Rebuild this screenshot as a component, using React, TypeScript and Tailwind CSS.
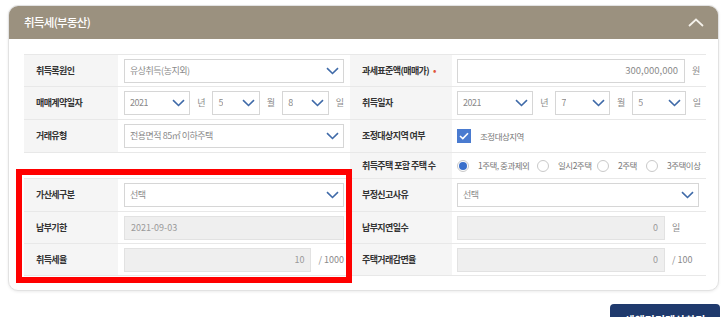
import React from "react";

const font = { fontFamily: '"Noto Sans CJK KR", "Noto Sans", sans-serif' };

function Chevron() {
  return (
    <svg width="13" height="8" viewBox="0 0 13 8" className="shrink-0">
      <path d="M1 1.2 L6.5 6.5 L12 1.2" fill="none" stroke="#3f6aa8" strokeWidth="1.6" />
    </svg>
  );
}

function Select({ value, w }: { value: string; w: string }) {
  return (
    <div className={`${w} h-[24px] flex items-center justify-between pl-[5px] pr-[4px] border border-[#d6d6d6] bg-white`}>
      <span className="text-[9px] tracking-[-0.5px] text-[#8a8a8a] truncate">{value}</span>
      <Chevron />
    </div>
  );
}

function Suffix({ children }: { children: React.ReactNode }) {
  return <span className="text-[9px] text-[#8a8a8a] whitespace-nowrap">{children}</span>;
}

function Label({ children }: { children: React.ReactNode }) {
  return (
    <div className="bg-[#f5f5f5] flex items-center pl-[12px] text-[9px] tracking-[-0.6px] font-semibold text-[#333] whitespace-nowrap">
      {children}
    </div>
  );
}

function Cell({ children, right }: { children?: React.ReactNode; right?: boolean }) {
  return (
    <div className={`flex items-center gap-[7px] ${right ? "pl-[5px] pr-[5px]" : "pl-[6px] pr-[6px]"}`}>
      {children}
    </div>
  );
}

function Radio({ checked, label, w }: { checked?: boolean; label: string; w: string }) {
  return (
    <div className={`${w} flex items-center gap-[9px] shrink-0`}>
      <span className="w-[12px] h-[12px] rounded-full border border-[#c9c9c9] bg-white flex items-center justify-center">
        {checked && <span className="w-[8px] h-[8px] rounded-full bg-[#3a6fcb]" />}
      </span>
      <span className="text-[8.5px] tracking-[-0.5px] text-[#777] whitespace-nowrap">{label}</span>
    </div>
  );
}

function ReadOnly({ value, w, align = "left" }: { value: string; w: string; align?: "left" | "right" }) {
  return (
    <div
      className={`${w} h-[24px] flex items-center px-[6px] border border-[#e2e2e2] bg-[#efefef] text-[9px] text-[#9a9a9a] ${
        align === "right" ? "justify-end" : "justify-start"
      }`}
    >
      {value}
    </div>
  );
}

const row = "grid grid-cols-[94px_232px_102px_254px] border-b border-[#e8e8e8]";

export default function App() {
  return (
    <div className="relative w-[725px] h-[317px] overflow-hidden bg-white" style={font}>
      <div className="pt-[5px] pl-[8px] pr-[6px]">
        {/* Card */}
        <div className="rounded-[10px] border border-[#e2e2e2] bg-white shadow-[0_1px_3px_rgba(0,0,0,0.08)] overflow-hidden">
          <div className="h-[33px] bg-[#9b917f] flex items-center justify-between pl-[15px] pr-[14px]">
            <span className="text-[11.5px] tracking-[-0.7px] font-medium text-white">취득세(부동산)</span>
            <svg width="16" height="9" viewBox="0 0 16 9">
              <path d="M1 8 L8 1.5 L15 8" fill="none" stroke="#f4f1ea" strokeWidth="1.8" />
            </svg>
          </div>

          <div className="pt-[15px] pb-[14px] pl-[15px]">
            <div className="w-[682px] border-t border-[#e8e8e8]">
              <div className={`${row} h-[32px]`}>
                <Label>취득록원인</Label>
                <Cell>
                  <Select value="유상취득(농지외)" w="w-[220px]" />
                </Cell>
                <Label>
                  과세표준액(매매가) <span className="text-[#e0553a] ml-[4px]">•</span>
                </Label>
                <Cell right>
                  <div className="w-[228px] h-[24px] flex items-center justify-end px-[6px] border border-[#d6d6d6] bg-white text-[9.5px] text-[#8a8a8a]">
                    300,000,000
                  </div>
                  <Suffix>원</Suffix>
                </Cell>
              </div>

              <div className={`${row} h-[33px]`}>
                <Label>매매계약일자</Label>
                <Cell>
                  <Select value="2021" w="w-[73px]" />
                  <Suffix>년</Suffix>
                  <Select value="5" w="w-[52px]" />
                  <Suffix>월</Suffix>
                  <Select value="8" w="w-[51px]" />
                  <Suffix>일</Suffix>
                </Cell>
                <Label>취득일자</Label>
                <Cell right>
                  <Select value="2021" w="w-[80px]" />
                  <Suffix>년</Suffix>
                  <Select value="7" w="w-[57px]" />
                  <Suffix>월</Suffix>
                  <Select value="5" w="w-[56px]" />
                  <Suffix>일</Suffix>
                </Cell>
              </div>

              <div className={`${row} h-[33px]`}>
                <Label>거래유형</Label>
                <Cell>
                  <Select value="전용면적 85㎡ 이하주택" w="w-[220px]" />
                </Cell>
                <Label>조정대상지역 여부</Label>
                <Cell right>
                  <span className="w-[14px] h-[14px] bg-[#4a7bd0] flex items-center justify-center">
                    <svg width="10" height="8" viewBox="0 0 10 8">
                      <path d="M1 4 L3.8 6.6 L9 1.2" fill="none" stroke="white" strokeWidth="1.6" />
                    </svg>
                  </span>
                  <span className="ml-[2px] text-[8.5px] tracking-[-0.5px] text-[#777]">조정대상지역</span>
                </Cell>
              </div>

              <div className={`${row} h-[26px]`}>
                <div className="col-span-2 bg-white" />
                <Label>취득주택 포함 주택 수</Label>
                <div className="flex items-center pl-[5px]">
                  <Radio checked label="1주택, 중과제외" w="w-[80px]" />
                  <Radio label="일시2주택" w="w-[60px]" />
                  <Radio label="2주택" w="w-[49px]" />
                  <Radio label="3주택이상" w="w-[55px]" />
                </div>
              </div>

              <div className={`${row} h-[33px]`}>
                <Label>가산세구분</Label>
                <Cell>
                  <Select value="선택" w="w-[220px]" />
                </Cell>
                <Label>부정신고사유</Label>
                <Cell right>
                  <Select value="선택" w="w-[242px]" />
                </Cell>
              </div>

              <div className={`${row} h-[32px]`}>
                <Label>납부기한</Label>
                <Cell>
                  <ReadOnly value="2021-09-03" w="w-[220px]" />
                </Cell>
                <Label>납부지연일수</Label>
                <Cell right>
                  <ReadOnly value="0" w="w-[208px]" align="right" />
                  <Suffix>일</Suffix>
                </Cell>
              </div>

              <div className={`${row} h-[32px]`}>
                <Label>취득세율</Label>
                <Cell>
                  <ReadOnly value="10" w="w-[189px]" align="right" />
                  <Suffix>/ 1000</Suffix>
                </Cell>
                <Label>주택거래감면율</Label>
                <Cell right>
                  <ReadOnly value="0" w="w-[208px]" align="right" />
                  <Suffix>/ 100</Suffix>
                </Cell>
              </div>
            </div>
          </div>
        </div>

        <div className="flex justify-end mt-[13px]">
          <button className="w-[110px] h-[32px] mr-[-1px] rounded-t-[4px] bg-[#1f3a6d] text-white text-[11px] font-bold">
            세액미리계산하기
          </button>
        </div>
      </div>

      {/* annotation highlight */}
      <div className="absolute left-[16px] top-[169px] w-[336px] h-[114px] border-[6px] border-[#ff0000] pointer-events-none" />
    </div>
  );
}
